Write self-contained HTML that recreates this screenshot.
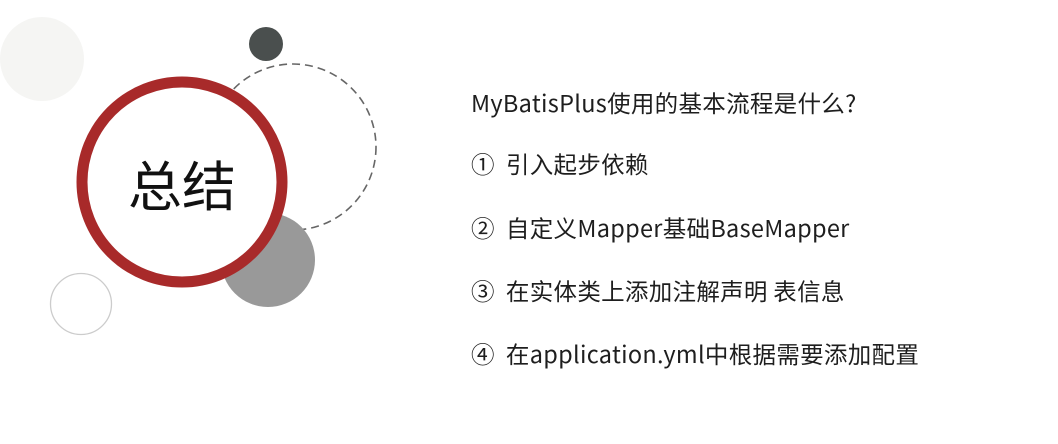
<!DOCTYPE html>
<html><head><meta charset="utf-8"><style>
html,body{margin:0;padding:0;background:#fff;width:1058px;height:444px;overflow:hidden;position:relative;}
.t{position:absolute;left:471px;font-family:"Noto Sans CJK SC","Liberation Sans",sans-serif;font-size:23.5px;letter-spacing:0.3px;color:#1e1e1e;line-height:30px;white-space:nowrap;}
.z{position:absolute;left:82px;top:149px;width:200px;text-align:center;font-family:"Noto Sans CJK SC",sans-serif;font-size:54px;line-height:68px;color:#111;}
</style></head><body>
<svg width="1058" height="444" style="position:absolute;left:0;top:0">
<circle cx="42" cy="59" r="42" fill="#f5f5f3"/>
<circle cx="266" cy="44" r="17" fill="#4a4f4e"/>
<circle cx="293" cy="147" r="83" fill="none" stroke="#666" stroke-width="1.6" stroke-dasharray="8 5"/>
<circle cx="268" cy="260" r="47" fill="#999"/>
<circle cx="182" cy="182" r="100" fill="#fff" stroke="#a82a2a" stroke-width="11"/>
<circle cx="81" cy="304" r="30.5" fill="none" stroke="#ccc" stroke-width="1.3"/>
</svg>
<div class="z">总结</div>
<div class="t" style="top:87px">MyBatisPlus使用的基本流程是什么?</div>
<div class="t" style="top:148px">①&nbsp; 引入起步依赖</div>
<div class="t" style="top:212px">②&nbsp; 自定义Mapper基础BaseMapper</div>
<div class="t" style="top:275px">③&nbsp; 在实体类上添加注解声明 表信息</div>
<div class="t" style="top:338px">④&nbsp; 在application.yml中根据需要添加配置</div>
</body></html>
